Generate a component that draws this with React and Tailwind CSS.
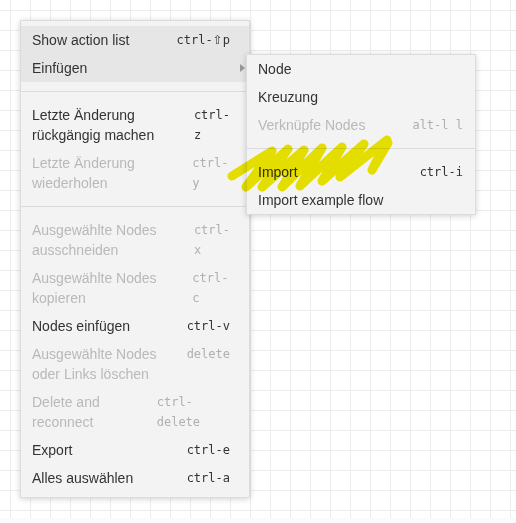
import React from 'react';

const mainItems = [
  { label: 'Show action list', key: <>ctrl-<span className="font-['DejaVu_Sans',sans-serif] text-[12px]">⇧</span>p</>, hl: true },
  { label: 'Einfügen', hl: true, sub: true },
  { sep: true },
  { label: 'Letzte Änderung rückgängig machen', key: 'ctrl-z' },
  { label: 'Letzte Änderung wiederholen', key: 'ctrl-y', off: true },
  { sep: true },
  { label: 'Ausgewählte Nodes ausschneiden', key: 'ctrl-x', off: true },
  { label: 'Ausgewählte Nodes kopieren', key: 'ctrl-c', off: true },
  { label: 'Nodes einfügen', key: 'ctrl-v' },
  { label: 'Ausgewählte Nodes oder Links löschen', key: 'delete', off: true },
  { label: 'Delete and reconnect', key: 'ctrl-delete', off: true },
  { label: 'Export', key: 'ctrl-e' },
  { label: 'Alles auswählen', key: 'ctrl-a' },
];

const subItems = [
  { label: 'Node' },
  { label: 'Kreuzung' },
  { label: 'Verknüpfe Nodes', key: 'alt-l l', off: true },
  { sep: true },
  { label: 'Import', key: 'ctrl-i' },
  { label: 'Import example flow' },
];

const Row = ({ item, pr }) => (
  <div
    className={`relative flex items-start py-1 pl-[11px] ${pr} ${item.hl ? 'bg-[#e6e6e6]' : ''}`}
  >
    <span
      className={`text-[14px] leading-5 ${item.off ? 'text-[#b9b9b9]' : 'text-[#333]'}`}
    >
      {item.label}
    </span>
    {item.key && (
      <span
        className={`ml-auto pl-[2px] text-[12px] leading-5 font-['DejaVu_Sans_Mono',monospace] ${item.off ? 'text-[#b0b0b0]' : 'text-[#333]'}`}
      >
        {item.key}
      </span>
    )}
    {item.sub && (
      <span className="absolute right-[4px] top-[10px] w-0 h-0 border-y-[4px] border-y-transparent border-l-[5px] border-l-[#999]" />
    )}
  </div>
);

const Sep = () => <div className="my-[9px] h-px bg-[#dcdcdc]" />;

export default function App() {
  return (
    <div className="w-[516px] h-[523px] bg-[#fbfbfb] font-['Liberation_Sans',Arial,sans-serif]">
      <div className="relative w-[516px] h-[518px] bg-white bg-[linear-gradient(to_right,#ececec_1px,transparent_1px),linear-gradient(to_bottom,#ececec_1px,transparent_1px)] bg-[size:20px_20px] bg-[position:10px_10px]">
        <div className="absolute left-[20px] top-[20px] w-[230px] bg-[#f3f3f3] border border-[#dcdcdc] shadow-[0_1px_6px_rgba(0,0,0,0.18)] py-[5px]">
          {mainItems.map((it, i) =>
            it.sep ? <Sep key={i} /> : <Row key={i} item={it} pr="pr-[19px]" />
          )}

          <div className="absolute left-[225px] top-[33px] w-[230px] bg-[#f3f3f3] border border-[#dcdcdc] shadow-[0_1px_6px_rgba(0,0,0,0.18)]">
            {subItems.map((it, i) =>
              it.sep ? <Sep key={i} /> : <Row key={i} item={it} pr="pr-[12px]" />
            )}
          </div>
        </div>

        {/* highlighter scribble */}
        <svg
          className="absolute left-0 top-0 pointer-events-none mix-blend-multiply"
          width="516"
          height="518"
        >
          <polyline
            points="232,176 272,151 246,187 288,149 262,187 304,150 282,187 322,148 300,186 342,147 322,181 364,144 340,177 387,140 372,170 388,143"
            fill="none"
            stroke="#f0e800"
            strokeWidth="9"
            strokeLinecap="round"
            strokeLinejoin="round"
          />
        </svg>
      </div>
    </div>
  );
}
